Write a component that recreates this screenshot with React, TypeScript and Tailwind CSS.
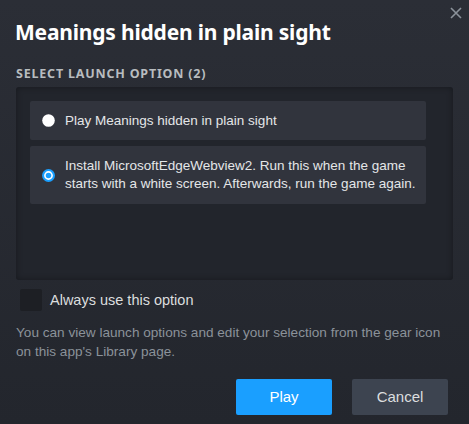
import { useState } from "react";

const OPTIONS = [
  { id: 0, label: "Play Meanings hidden in plain sight" },
  {
    id: 1,
    label:
      "Install MicrosoftEdgeWebview2. Run this when the game starts with a white screen. Afterwards, run the game again.",
  },
];

function Radio({ checked }: { checked: boolean }) {
  return (
    <svg width="13" height="13" viewBox="0 0 13 13" className="shrink-0">
      {checked ? (
        <>
          <circle cx="6.5" cy="6.5" r="6.5" fill="#1a9fff" />
          <circle cx="6.5" cy="6.5" r="3.6" fill="#1a9fff" stroke="#ffffff" strokeWidth="1.6" />
        </>
      ) : (
        <circle cx="6.5" cy="6.5" r="6.3" fill="#ffffff" />
      )}
    </svg>
  );
}

export default function App() {
  const [selected, setSelected] = useState(1);
  const [always, setAlways] = useState(false);

  return (
    <div
      className="relative w-[469px] h-[424px] overflow-hidden bg-gradient-to-b from-[#2b2e36] to-[#23262d] text-[#dcdedf]"
      style={{ fontFamily: '"Liberation Sans", Arial, sans-serif' }}
    >
      {/* close */}
      <button className="absolute right-[7px] top-[7px] w-[12px] h-[12px]" aria-label="Close">
        <svg width="12" height="12" viewBox="0 0 12 12">
          <path d="M1 1L11 11M11 1L1 11" stroke="#8b929a" strokeWidth="1.6" />
        </svg>
      </button>

      <div className="flex flex-col px-4 pt-[17px]">
        <h1
          className="-ml-[1px] text-[21px] leading-[30px] font-bold text-white tracking-[-0.2px]"
          style={{ fontFamily: '"Noto Sans", sans-serif' }}
        >
          Meanings hidden in plain sight
        </h1>

        <div
          className="mt-[19px] text-[12.5px] leading-[16px] font-bold uppercase tracking-[0.8px] text-[#b8bcbf]"
          style={{ fontFamily: '"Noto Sans", sans-serif' }}
        >
          Select launch option (2)
        </div>

        <div className="mt-[5px] h-[193px] rounded-[3px] bg-[#22252c] shadow-[inset_0_0_6px_rgba(0,0,0,0.35)] pl-[14px] pr-[27px] pt-[14px] flex flex-col gap-[6px]">
          {OPTIONS.map((o) => (
            <button
              key={o.id}
              onClick={() => setSelected(o.id)}
              className={`flex items-center gap-[10px] text-left rounded-[2px] bg-[#31343d] pl-[12px] pr-[8px] text-[13.5px] leading-[18px] text-[#e4e6e8] ${
                o.id === 0 ? "h-[39px]" : "h-[58px]"
              }`}
            >
              <Radio checked={selected === o.id} />
              <span>{o.label}</span>
            </button>
          ))}
        </div>

        <label className="mt-[9px] ml-[4px] flex items-center gap-[8px] cursor-pointer">
          <span
            onClick={() => setAlways(!always)}
            className="w-[22px] h-[22px] rounded-[2px] bg-[#1d1f24] shrink-0"
          />
          <span className="text-[14.5px] leading-[20px] text-[#dcdedf]">Always use this option</span>
        </label>

        <p className="mt-[12px] text-[13.6px] leading-[19px] text-[#8b929a]">
          You can view launch options and edit your selection from the gear icon on this app's
          Library page.
        </p>

        <div className="mt-[18px] flex justify-end gap-[20px] pr-[5px]">
          <button className="w-[96px] h-[36px] rounded-[2px] bg-[#1a9fff] text-white text-[15px]">
            Play
          </button>
          <button className="w-[96px] h-[36px] rounded-[2px] bg-[#3d4450] text-[#dcdedf] text-[15px]">
            Cancel
          </button>
        </div>
      </div>
    </div>
  );
}
